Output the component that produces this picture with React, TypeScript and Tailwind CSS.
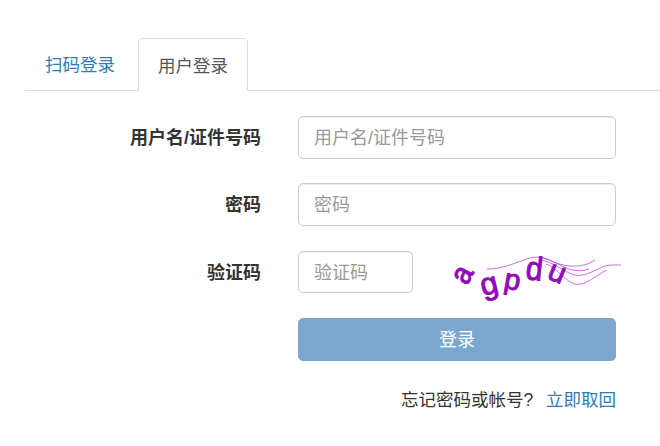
const font = { fontFamily: '"Liberation Sans", "Noto Sans CJK SC", sans-serif' };

const Captcha = () => (
  <svg width="190" height="70" viewBox="0 0 190 70" className="block overflow-visible">
    <g fill="none" stroke="#c648dc" strokeWidth="0.8">
      <path d="M47 29 C62 29 72 24 84 20 C94 16 102 16 112 21 C124 27 142 29 155 20" />
      <path d="M100 17 C112 20 122 27 132 30 C138 31 144 31 149 29" />
      <path d="M100 20 C114 22 124 32 134 35 C148 38 160 25 171 25 L181 25" />
      <path d="M106 24 C116 27 124 40 134 44 C146 47 158 33 167 30" />
    </g>
    <g fill="#900cb8" fontFamily="'Liberation Sans', sans-serif" stroke="#900cb8" strokeWidth="1">
      <text x="0" y="0" fontSize="28" transform="translate(27 46) rotate(-62) scale(1 1.1)">a</text>
      <text x="0" y="0" fontSize="31" transform="translate(43 56) rotate(-14)">g</text>
      <text x="0" y="0" fontSize="29" transform="translate(63 48) rotate(10)">p</text>
      <text x="0" y="0" fontSize="30" transform="translate(85 39) rotate(6) scale(1 1.1)">d</text>
      <text x="0" y="0" fontSize="30" transform="translate(106 38) rotate(22)">u</text>
    </g>
  </svg>
);

const Field = ({ label, width }: { label: string; width: string }) => (
  <div className="flex items-center">
    <label className="h-[42px] w-[261px] shrink-0 pl-[25px] text-right text-[18px] font-bold leading-[45px] text-[#333]">{label}</label>
    <input
      placeholder={label}
      className={`ml-[37px] h-[42.5px] ${width} rounded-[5px] border border-[#ccc] bg-white px-[15px] pt-[3px] text-[18px] text-[#555] shadow-[inset_0_1px_1px_rgba(0,0,0,0.075)] outline-none placeholder:text-[#999]`}
    />
  </div>
);

export default function App() {
  return (
    <div className="h-[446px] w-[660px] overflow-hidden bg-white pt-[38px]" style={font}>
      <div className="ml-[25px] flex h-[53px] border-b border-[#ddd]">
        <a className="mr-[1px] h-[52px] w-[112px] pl-[20px] pt-[1px] text-[17.5px] leading-[53px] text-[#337ab7]">扫码登录</a>
        <a className="h-[53px] w-[110px] rounded-t-[5px] border border-[#ddd] border-b-white bg-white pl-[19px] pt-[1px] text-[17.5px] leading-[52px] text-[#555]">用户登录</a>
      </div>
      <div className="mt-[25px] flex flex-col gap-[24.5px]">
        <Field label="用户名/证件号码" width="w-[318px]" />
        <Field label="密码" width="w-[318px]" />
        <div className="relative mt-[0.5px]">
          <Field label="验证码" width="w-[115px]" />
          <div className="absolute left-[440px] top-[-11px]">
            <Captcha />
          </div>
        </div>
      </div>
      <div className="mt-[24.5px] pl-[298px]">
        <button className="h-[43px] w-[318px] rounded-[5px] border border-[#7ba7cd] bg-[#7ca8d0] pt-[2px] text-[18px] text-white">登录</button>
      </div>
      <div className="mt-[25px] w-[616px] text-right text-[17.5px] leading-[28px] text-[#333]">
        忘记密码或帐号? <a className="ml-[8px] text-[#337ab7]">立即取回</a>
      </div>
    </div>
  );
}
